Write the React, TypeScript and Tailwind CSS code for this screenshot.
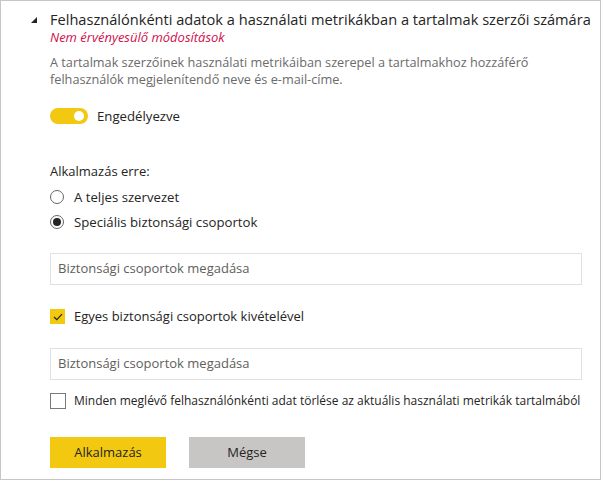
export default function App() {
  const font = { fontFamily: '"Open Sans", "Noto Sans", sans-serif' };
  return (
    <div className="w-[602px] h-[481px] bg-white" style={font}>
      <div className="w-[601px] h-[480px] border border-[#c6c6c6] bg-white overflow-hidden">
        {/* Header */}
        <div className="flex items-start pt-[8px]">
          <div className="w-[49px] shrink-0 flex justify-end pr-[13px] pt-[8px]">
            <svg width="6" height="6" viewBox="0 0 6 6">
              <polygon points="0,6 6,6 6,0" fill="#252423" />
            </svg>
          </div>
          <div className="flex flex-col">
            <h2 className="text-[14.6px] leading-[20px] whitespace-nowrap text-[#252423]">
              Felhasználónkénti adatok a használati metrikákban a tartalmak szerzői számára
            </h2>
            <p className="text-[13px] leading-[17px] italic text-[#d0104c]">Nem érvényesülő módosítások</p>
          </div>
        </div>

        <div className="pl-[49px] pr-[19px]">
          <p className="mt-[8px] text-[12.7px] leading-[17px] text-[#6b6b6b]">
            A tartalmak szerzőinek használati metrikáiban szerepel a tartalmakhoz hozzáférő<br />
            felhasználók megjelenítendő neve és e-mail-címe.
          </p>

          {/* Toggle */}
          <div className="mt-[20px] h-[16px] flex items-center gap-[9px]">
            <div className="w-[38px] h-[16px] shrink-0 rounded-full bg-[#f2c811] flex items-center justify-end pr-[4px]">
              <div className="w-[10px] h-[10px] rounded-full bg-white" />
            </div>
            <span className="text-[13.2px] leading-[16px] text-[#252423]">Engedélyezve</span>
          </div>

          <p className="mt-[39px] text-[13px] leading-[17px] text-[#252423]">Alkalmazás erre:</p>

          <div className="mt-[10px] flex flex-col gap-[11px]">
            <label className="h-[14px] flex items-center gap-[10px]">
              <span className="w-[14px] h-[14px] shrink-0 rounded-full border border-[#666666]" />
              <span className="text-[13.2px] leading-[14px] text-[#252423]">A teljes szervezet</span>
            </label>
            <label className="h-[14px] flex items-center gap-[10px]">
              <span className="w-[14px] h-[14px] shrink-0 rounded-full border border-[#666666] flex items-center justify-center">
                <span className="w-[8px] h-[8px] rounded-full bg-[#252423]" />
              </span>
              <span className="text-[13.2px] leading-[14px] text-[#252423]">Speciális biztonsági csoportok</span>
            </label>
          </div>

          <div className="mt-[24px] h-[32px] w-[532px] border border-[#e1e1e1] flex items-center px-[7px]">
            <span className="text-[13px] text-[#605e5c]">Biztonsági csoportok megadása</span>
          </div>

          <label className="mt-[24px] h-[15px] flex items-center gap-[9px]">
            <span className="w-[15px] h-[15px] shrink-0 bg-[#f2c811] flex items-center justify-center">
              <svg width="10" height="8" viewBox="0 0 10 8">
                <path d="M1 4 L3.8 6.6 L9 1.2" stroke="#252423" strokeWidth="1.2" fill="none" />
              </svg>
            </span>
            <span className="text-[13px] leading-[15px] text-[#252423]">Egyes biztonsági csoportok kivételével</span>
          </label>

          <div className="mt-[24px] h-[32px] w-[532px] border border-[#e1e1e1] flex items-center px-[7px]">
            <span className="text-[13px] text-[#605e5c]">Biztonsági csoportok megadása</span>
          </div>

          <label className="mt-[13px] h-[16px] flex items-center gap-[8px]">
            <span className="w-[16px] h-[16px] shrink-0 border border-[#7a7a7a]" />
            <span className="text-[12px] leading-[16px] whitespace-nowrap text-[#252423]">
              Minden meglévő felhasználónkénti adat törlése az aktuális használati metrikák tartalmából
            </span>
          </label>

          <div className="mt-[28px] flex gap-[23px]">
            <button className="w-[116px] h-[31px] bg-[#f2c811] text-[13px] text-[#252423]">Alkalmazás</button>
            <button className="w-[116px] h-[31px] bg-[#c8c6c4] text-[13px] text-[#252423]">Mégse</button>
          </div>
        </div>
      </div>
    </div>
  );
}
